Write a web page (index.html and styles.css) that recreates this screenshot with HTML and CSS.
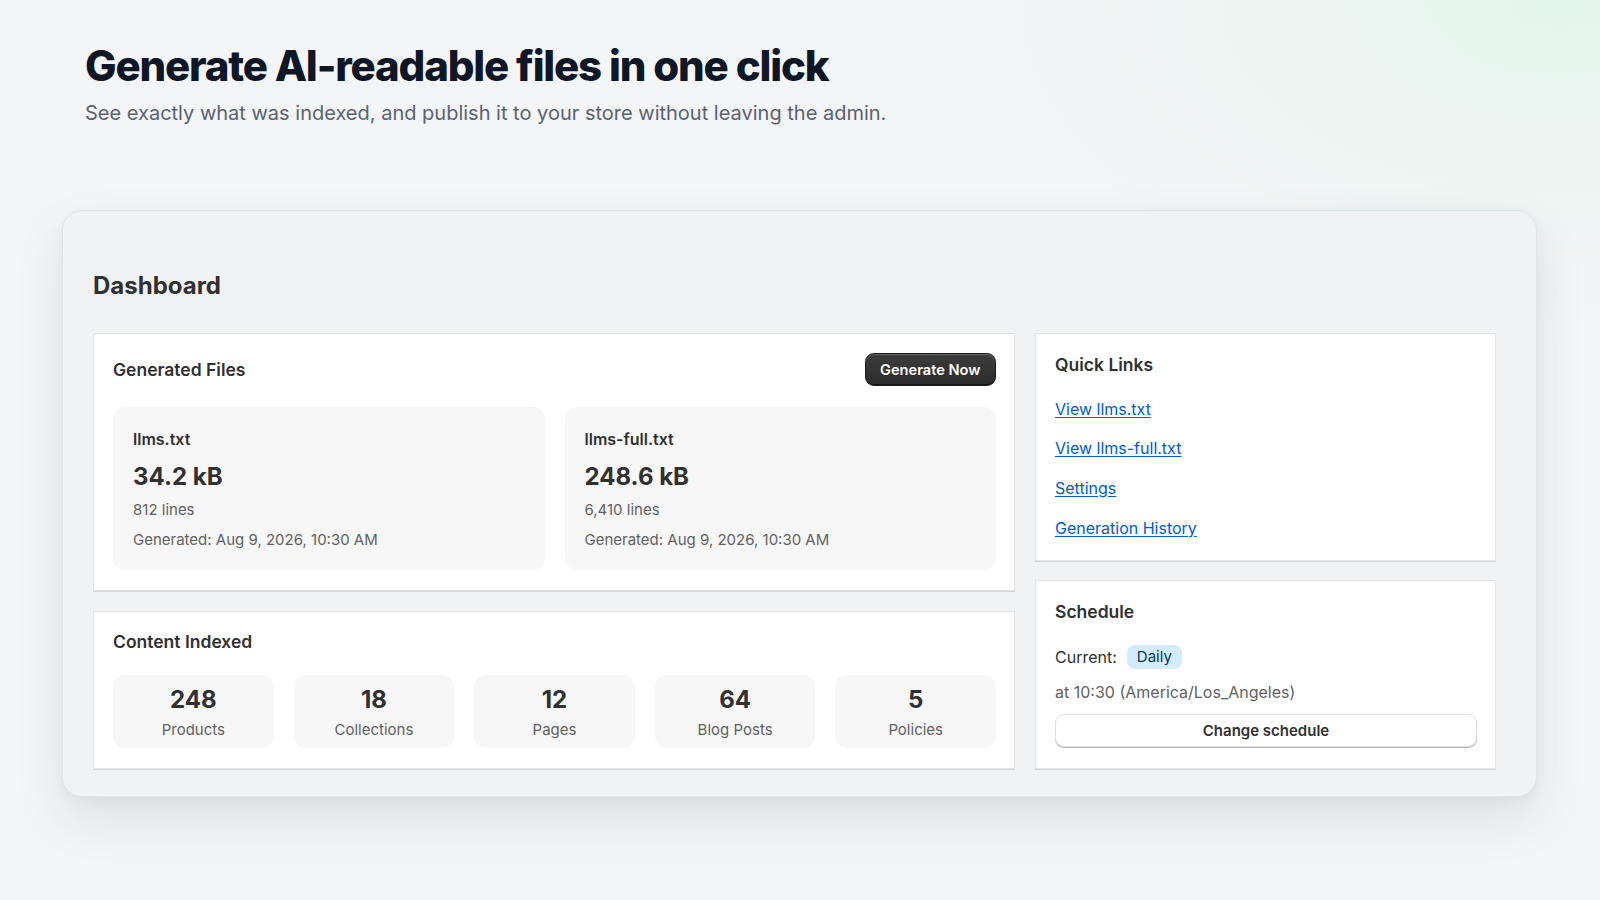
FILE: index.html
```html
<!DOCTYPE html>
<html lang="en">
<head>
<meta charset="utf-8">
<title>Dashboard</title>
<link rel="stylesheet" href="styles.css">
</head>
<body>
<div class="page">
  <header class="hero">
    <h1 class="hero-title">Generate AI-readable files in one click</h1>
    <p class="hero-sub">See exactly what was indexed, and publish it to your store without leaving the admin.</p>
  </header>

  <section class="frame">
    <h2 class="dash-title">Dashboard</h2>
    <div class="layout">
      <div class="col col-main">
        <div class="panel">
          <div class="panel-head">
            <h3 class="panel-title">Generated Files</h3>
            <button class="btn-primary">Generate Now</button>
          </div>
          <div class="files">
            <div class="file">
              <div class="file-name">llms.txt</div>
              <div class="file-size">34.2 kB</div>
              <div class="file-meta">812 lines</div>
              <div class="file-meta file-date">Generated: Aug 9, 2026, 10:30 AM</div>
            </div>
            <div class="file">
              <div class="file-name">llms-full.txt</div>
              <div class="file-size">248.6 kB</div>
              <div class="file-meta">6,410 lines</div>
              <div class="file-meta file-date">Generated: Aug 9, 2026, 10:30 AM</div>
            </div>
          </div>
        </div>

        <div class="panel">
          <h3 class="panel-title">Content Indexed</h3>
          <div class="stats">
            <div class="stat"><div class="stat-num">248</div><div class="stat-label">Products</div></div>
            <div class="stat"><div class="stat-num">18</div><div class="stat-label">Collections</div></div>
            <div class="stat"><div class="stat-num">12</div><div class="stat-label">Pages</div></div>
            <div class="stat"><div class="stat-num">64</div><div class="stat-label">Blog Posts</div></div>
            <div class="stat"><div class="stat-num">5</div><div class="stat-label">Policies</div></div>
          </div>
        </div>
      </div>

      <div class="col col-side">
        <div class="panel">
          <h3 class="panel-title">Quick Links</h3>
          <ul class="links">
            <li><a href="#">View llms.txt</a></li>
            <li><a href="#">View llms-full.txt</a></li>
            <li><a href="#">Settings</a></li>
            <li><a href="#">Generation History</a></li>
          </ul>
        </div>

        <div class="panel panel-grow">
          <h3 class="panel-title">Schedule</h3>
          <div class="sched-row">
            <span class="sched-label">Current:</span>
            <span class="badge">Daily</span>
          </div>
          <div class="sched-time">at 10:30 (America/Los_Angeles)</div>
          <button class="btn-secondary">Change schedule</button>
        </div>
      </div>
    </div>
  </section>
</div>
</body>
</html>
```

FILE: styles.css
```css
* { box-sizing: border-box; }

html, body {
  margin: 0;
  padding: 0;
}

body {
  width: 1600px;
  height: 900px;
  overflow: hidden;
  font-family: Inter, "Noto Sans", "Liberation Sans", sans-serif;
  color: #303030;
  background-color: #f4f5f7;
  background-image: radial-gradient(ellipse 600px 340px at 1560px 0px, #e4f5ed 0%, rgba(229,245,238,0.55) 45%, rgba(244,245,247,0) 100%);
}

.page {
  padding: 0 63px 0 62px;
}

.hero {
  padding: 40px 0 0 23px;
}

.hero-title {
  margin: 0;
  font-family: Inter, "Noto Sans", sans-serif;
  font-weight: 800;
  font-size: 42px;
  line-height: 52px;
  letter-spacing: -0.028em;
  color: #0f1626;
}

.hero-sub {
  margin: 7px 0 0 0;
  font-size: 20px;
  line-height: 28px;
  color: #5a6272;
}

.frame {
  margin-top: 83px;
  background: #f1f2f4;
  border: 1px solid #e2e3e6;
  border-radius: 20px;
  padding: 59px 40px 27px 30px;
  box-shadow: 0 22px 50px rgba(30, 35, 50, 0.10), 0 4px 12px rgba(30, 35, 50, 0.04);
}

.dash-title {
  margin: 0 0 31px 0;
  font-size: 24px;
  line-height: 32px;
  font-weight: 700;
  color: #303030;
}

.layout {
  display: grid;
  grid-template-columns: 922px 1fr;
  gap: 20px;
}

.col {
  display: flex;
  flex-direction: column;
  gap: 19.5px;
}

.panel {
  background: #fff;
  border: 1px solid #e3e3e3;
  box-shadow: 0 1px 0 #d6d6d6;
  padding: 19px 18px 20px 19px;
}

.panel-grow { flex: 1; }

.panel-head {
  display: flex;
  align-items: center;
  justify-content: space-between;
  height: 33px;
}

.panel-title {
  margin: 0;
  font-size: 17.5px;
  line-height: 20px;
  font-weight: 600;
  color: #303030;
}

.panel > .panel-title {
  margin-top: 1.5px;
}

.btn-primary {
  font-family: inherit;
  font-size: 14.6px;
  font-weight: 600;
  color: #fff;
  height: 33px;
  padding: 0 14.5px;
  border-radius: 9px;
  border: 1px solid #1a1a1a;
  background: linear-gradient(#3d3d3d, #2b2b2b);
  box-shadow: inset 0 1px 0 rgba(255,255,255,0.22), inset 0 -1px 0 rgba(0,0,0,0.5);
  cursor: pointer;
}

.files {
  margin-top: 21px;
  display: grid;
  grid-template-columns: 1fr 1fr;
  gap: 20px;
}

.file {
  background: #f7f7f7;
  border-radius: 12px;
  height: 163px;
  padding: 20px 20px 0 20px;
}

.file-name {
  font-size: 16px;
  line-height: 24px;
  font-weight: 600;
  color: #303030;
}

.file-size {
  margin-top: 11px;
  font-size: 24px;
  line-height: 30px;
  font-weight: 700;
  color: #303030;
}

.file-meta {
  margin-top: 8px;
  font-size: 15px;
  line-height: 20px;
  color: #616161;
}

.file-date { margin-top: 10px; }

.stats {
  margin-top: 23px;
  display: grid;
  grid-template-columns: repeat(5, 1fr);
  gap: 20px;
}

.stat {
  background: #f7f7f7;
  border-radius: 12px;
  padding: 10px 0 8px 0;
  display: flex;
  flex-direction: column;
  align-items: center;
}

.stat-num {
  font-size: 24px;
  line-height: 30px;
  font-weight: 700;
  color: #303030;
}

.stat-label {
  margin-top: 5px;
  font-size: 15px;
  line-height: 20px;
  color: #616161;
}

.links {
  list-style: none;
  margin: 22px 0 0 0;
  padding: 0;
  display: flex;
  flex-direction: column;
  gap: 15.7px;
}

.links li {
  font-size: 16px;
  line-height: 24px;
}

.links a {
  color: #005bd3;
  text-decoration: underline;
  text-underline-offset: 2px;
}

.sched-row {
  margin-top: 23px;
  display: flex;
  align-items: center;
  gap: 10px;
}

.sched-label {
  font-size: 16px;
  color: #303030;
}

.badge {
  display: inline-block;
  background: #d5ebff;
  color: #003a5a;
  font-size: 15px;
  line-height: 24px;
  padding: 0 10px;
  border-radius: 8px;
}

.sched-time {
  margin-top: 11px;
  font-size: 16px;
  line-height: 24px;
  color: #616161;
}

.btn-secondary {
  display: block;
  width: 100%;
  margin-top: 10.5px;
  height: 33px;
  font-family: inherit;
  font-size: 15px;
  font-weight: 600;
  color: #303030;
  background: #fff;
  border: 1px solid #e0e0e0;
  border-radius: 9px;
  box-shadow: 0 1px 0 #b5b5b5;
  cursor: pointer;
}
```
